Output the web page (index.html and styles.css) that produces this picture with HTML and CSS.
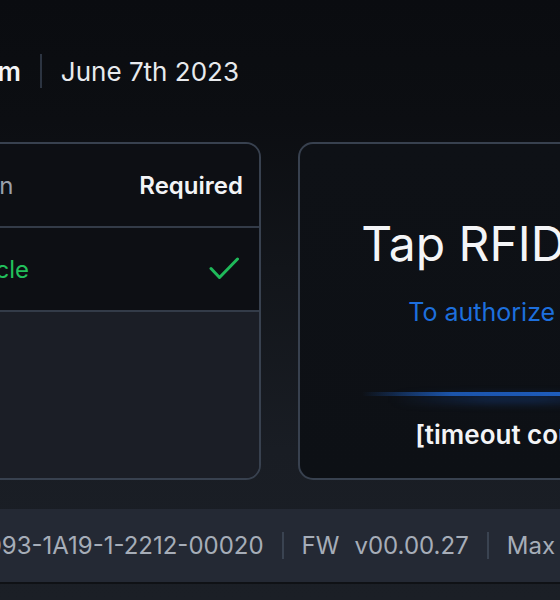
FILE: index.html
```html
<!DOCTYPE html>
<html lang="en">
<head>
<meta charset="utf-8">
<title>Charger</title>
<link rel="stylesheet" href="styles.css">
</head>
<body>
<div class="screen">
  <header class="topbar">
    <span class="time">10:42 am</span>
    <span class="vsep"></span>
    <span class="date">June 7th 2023</span>
  </header>
  <main class="cards">
    <section class="steps">
      <div class="step step-head">
        <span class="step-label">Authorization</span>
        <span class="step-state">Required</span>
      </div>
      <div class="step step-done">
        <span class="step-label">Plug in vehicle</span>
        <svg class="check" width="30" height="24" viewBox="0 0 30 24" aria-hidden="true">
          <path d="M2 11.5 L10.5 20.5 L28.5 2" fill="none" stroke="#1fb95a" stroke-width="3" stroke-linecap="round" stroke-linejoin="round"/>
        </svg>
      </div>
      <div class="step-empty"></div>
    </section>
    <section class="rfid">
      <h1 class="rfid-title">Tap RFID Tag</h1>
      <p class="rfid-sub">To authorize start</p>
      <div class="glow"></div>
      <p class="rfid-timeout">[timeout count]</p>
    </section>
  </main>
  <footer class="infobar">
    <span class="info"><span class="info-label">SN</span><span>0093-1A19-1-2212-00020</span></span>
    <span class="vsep small"></span>
    <span class="info"><span class="info-label">FW</span><span>v00.00.27</span></span>
    <span class="vsep small"></span>
    <span class="info"><span class="info-label">Max</span><span>22 kW</span></span>
  </footer>
</div>
</body>
</html>
```

FILE: styles.css
```css
html, body {
  margin: 0;
  padding: 0;
}
body {
  width: 560px;
  height: 600px;
  overflow: hidden;
  font-family: Inter, "Noto Sans", "Liberation Sans", sans-serif;
  background: linear-gradient(180deg, #0a0c10 0%, #0c0e12 20%, #12151a 45%, #191d24 75%, #1b1f26 100%);
  color: #e9ebee;
}
.screen {
  width: 1100px;
  margin-left: -300px;
  display: flex;
  flex-direction: column;
}
.topbar {
  height: 142px;
  box-sizing: border-box;
  padding: 56px 0 0 206px;
  display: flex;
  align-items: flex-start;
  gap: 19px;
}
.time {
  font-size: 26px;
  font-weight: 600;
  line-height: 32px;
  color: #f3f4f6;
}
.date {
  font-size: 26px;
  font-weight: 400;
  line-height: 32px;
  color: #e8eaed;
}
.vsep {
  width: 2px;
  height: 34px;
  margin-top: -2px;
  background: #2c3441;
}
.cards {
  display: flex;
  gap: 37px;
  height: 338px;
  padding-left: 120px;
}
.steps {
  width: 441px;
  box-sizing: border-box;
  border: 2px solid #38414f;
  border-radius: 15px;
  overflow: hidden;
  display: flex;
  flex-direction: column;
  background: #1b1e26;
}
.step {
  height: 82px;
  border-bottom: 2px solid #333b48;
  background: #0d0f14;
  display: flex;
  align-items: center;
  justify-content: space-between;
  padding: 0 16px 0 43px;
}
.step-label {
  font-size: 24px;
  color: #9aa1ac;
}
.step-head .step-label {
  margin-left: -3px;
}
.step-state {
  font-size: 24px;
  font-weight: 600;
  color: #f3f4f6;
}
.step-done .step-label {
  color: #22c05c;
}
.check {
  margin-right: 4px;
}
.step-empty {
  flex: 1;
  background: #1b1e26;
}
.rfid {
  width: 428px;
  box-sizing: border-box;
  border: 2px solid #38414f;
  border-radius: 15px;
  background: linear-gradient(180deg, #0e1116 0%, #0d1015 100%);
  display: flex;
  flex-direction: column;
  align-items: center;
  padding-top: 72px;
}
.rfid-title {
  margin: 0;
  font-size: 48px;
  font-weight: 400;
  line-height: 56px;
  color: #f4f5f7;
}
.rfid-sub {
  margin: 24px 0 0;
  font-size: 25px;
  line-height: 32px;
  color: #1d6fdd;
}
.glow {
  position: relative;
  margin-top: 64px;
  width: 300px;
  height: 4px;
  background: linear-gradient(90deg, rgba(30,95,190,0) 0%, #1c55ab 30%, #2060c0 70%, rgba(30,95,190,0) 100%);
}
.glow::after {
  content: "";
  position: absolute;
  left: 10%;
  right: 10%;
  top: 3px;
  height: 8px;
  background: linear-gradient(90deg, rgba(25,80,170,0) 0%, rgba(25,80,170,0.4) 40%, rgba(25,80,170,0.4) 60%, rgba(25,80,170,0) 100%);
  filter: blur(4px);
}
.rfid-timeout {
  margin: 23px 0 0;
  font-size: 26px;
  font-weight: 600;
  line-height: 32px;
  color: #f3f4f6;
}
.infobar {
  margin-top: 29px;
  height: 73px;
  box-sizing: content-box;
  border-bottom: 2px solid #0f1115;
  background: #242934;
  display: flex;
  align-items: center;
  gap: 18px;
  padding-left: 223px;
  font-size: 24px;
  color: #a6adb8;
}
.info {
  display: flex;
  gap: 15px;
}
.vsep.small {
  height: 27px;
  margin-top: 0;
  background: #3a4351;
}
```
